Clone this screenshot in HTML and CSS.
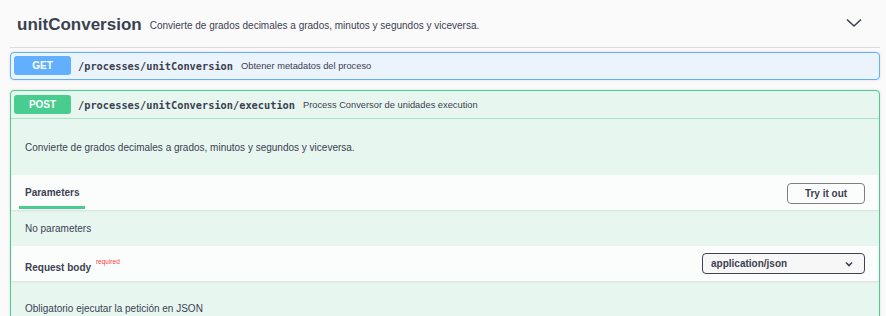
FILE: index.html
```html
<!DOCTYPE html>
<html>
<head>
    <meta charset="utf-8">
    <link rel="stylesheet" href="styles.css">
</head>
<body>
    <div class="wrapper">
        <!-- Tag header -->
        <div class="tag">
            <h3 class="tag-title">unitConversion</h3>
            <span class="tag-desc">Convierte de grados decimales a grados, minutos y segundos y viceversa.</span>
            <svg class="tag-arrow" width="16" height="10" viewBox="0 0 16 10">
                <polyline points="1,1.5 8,8 15,1.5" fill="none" stroke="#3b4151" stroke-width="1.6"/>
            </svg>
        </div>

        <!-- GET -->
        <div class="opblock opblock-get">
            <div class="summary">
                <span class="method">GET</span>
                <span class="path">/processes/unitConversion</span>
                <span class="summary-desc">Obtener metadatos del proceso</span>
            </div>
        </div>

        <!-- POST -->
        <div class="opblock opblock-post">
            <div class="summary">
                <span class="method">POST</span>
                <span class="path">/processes/unitConversion/execution</span>
                <span class="summary-desc">Process Conversor de unidades execution</span>
            </div>
            <div class="op-description">Convierte de grados decimales a grados, minutos y segundos y viceversa.</div>

            <div class="section-header">
                <div class="tab">Parameters</div>
                <button class="try-out">Try it out</button>
            </div>
            <div class="section-body">No parameters</div>

            <div class="section-header">
                <div class="label">Request body <sup class="required">required</sup></div>
                <div class="select">
                    <span>application/json</span>
                    <svg width="8" height="6" viewBox="0 0 8 6">
                        <polyline points="1,1.5 4,4.5 7,1.5" fill="none" stroke="#3b4151" stroke-width="1.6"/>
                    </svg>
                </div>
            </div>
            <div class="section-body section-last">Obligatorio ejecutar la petición en JSON</div>
        </div>
    </div>
</body>
</html>
```

FILE: styles.css
```css
/* page */
body {
    margin: 0;
    background-color: #fafafa;
    font-family: "Liberation Sans", Arial, sans-serif;
    color: #3b4151;
}

.wrapper {
    padding: 0 6px 0 10px;
}

/* tag header */
.tag {
    display: flex;
    align-items: center;
    height: 44px;
    padding: 3px 18px 0 7px;
    border-bottom: 1px solid #dcdcdc;
}

.tag-title {
    margin: 0;
    font-size: 17px;
    font-weight: bold;
}

.tag-desc {
    margin-left: 8px;
    font-size: 10px;
    flex: 1;
}

.tag-arrow {
    margin-top: -4px;
}

/* operation blocks */
.opblock {
    margin-top: 4px;
    border: 1px solid;
    border-radius: 4px;
    box-shadow: 0 0 3px rgba(0, 0, 0, 0.12);
}

.opblock-get {
    border-color: #61affe;
    background-color: #ebf3fb;
}

.opblock-post {
    margin-top: 10px;
    border-color: #49cc90;
    background-color: #e8f6f0;
}

.summary {
    display: flex;
    align-items: center;
    padding: 3px 3px 4px;
}

.opblock-post .summary {
    border-bottom: 1px solid #a9e3c6;
    padding: 4px 3px;
}

.method {
    width: 57px;
    height: 19px;
    display: flex;
    justify-content: center;
    align-items: center;
    border-radius: 3px;
    color: white;
    font-size: 10px;
    font-weight: bold;
}

.opblock-get .method {
    background-color: #61affe;
}

.opblock-post .method {
    background-color: #49cc90;
}

.path {
    margin-left: 7px;
    font-family: "DejaVu Sans Mono", "Liberation Mono", monospace;
    font-size: 10.3px;
    font-weight: bold;
}

.summary-desc {
    margin-left: 8px;
    font-size: 9.3px;
}

.op-description {
    height: 56px;
    display: flex;
    align-items: center;
    padding: 0 14px;
    font-size: 10px;
}

/* sections */
.section-header {
    position: relative;
    height: 35px;
    display: flex;
    justify-content: space-between;
    align-items: center;
    padding: 0 14px;
    background-color: rgba(255, 255, 255, 0.8);
    box-shadow: 0 1px 2px rgba(0, 0, 0, 0.08);
}

.tab {
    position: relative;
    align-self: stretch;
    display: flex;
    align-items: center;
    font-size: 10px;
    font-weight: bold;
}

.tab::after {
    content: "";
    position: absolute;
    left: -6px;
    bottom: 1px;
    width: 66px;
    height: 3px;
    background-color: #49cc90;
}

.try-out {
    width: 78px;
    height: 21px;
    margin-top: 1px;
    background: transparent;
    border: 1.5px solid #7f7f7f;
    border-radius: 4px;
    font-family: "Liberation Sans", Arial, sans-serif;
    font-size: 10px;
    font-weight: bold;
    color: #3b4151;
}

.section-body {
    height: 36px;
    display: flex;
    align-items: center;
    padding: 0 14px;
    font-size: 10px;
}

.section-last {
    height: auto;
    padding-top: 22px;
    padding-bottom: 14px;
}

.label {
    font-size: 10px;
    font-weight: bold;
    margin-top: 3px;
}

.required {
    color: #f93e3e;
    font-size: 6.5px;
    font-weight: normal;
    margin-left: 2px;
    vertical-align: 7px;
}

.select {
    width: 163px;
    height: 21px;
    box-sizing: border-box;
    display: flex;
    justify-content: space-between;
    align-items: center;
    padding: 0 11px 0 8px;
    border: 1.5px solid #41444e;
    border-radius: 4px;
    background-color: #f7f7f7;
    font-size: 10px;
    font-weight: bold;
}
```
